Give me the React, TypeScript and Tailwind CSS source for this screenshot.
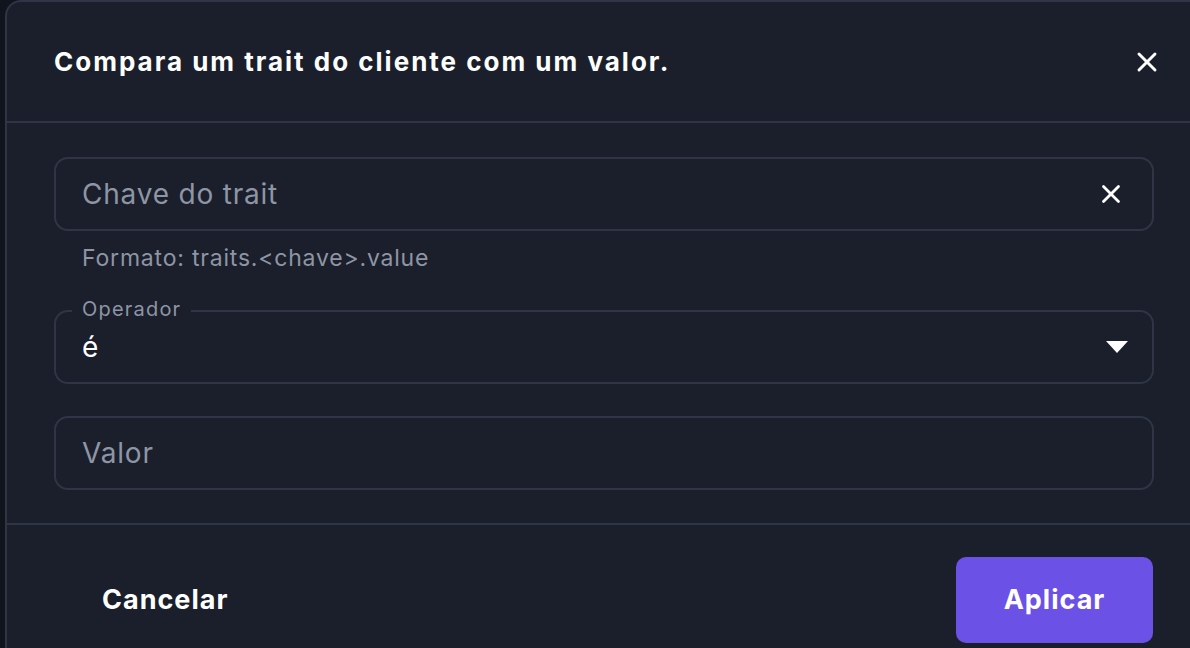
import { X } from "lucide-react";

export default function App() {
  return (
    <div
      className="w-[1190px] h-[648px] overflow-hidden bg-[#10141d] pl-[5px]"
      style={{ fontFamily: "Inter, 'Noto Sans', sans-serif" }}
    >
      <div className="h-full w-[1200px] bg-[#1a1f2b] border-l-2 border-t-2 border-[#2f3544] rounded-tl-2xl flex flex-col">
        {/* header */}
        <div className="h-[121px] flex items-center justify-between pl-[47px] pr-[42px] border-b-2 border-[#2f3544]">
          <h2 className="text-[26px] font-bold text-white tracking-[2px]">
            Compara um trait do cliente com um valor.
          </h2>
          <X className="text-white" size={32} strokeWidth={2.2} />
        </div>

        {/* body */}
        <div className="flex flex-col pl-[47px] pt-[34px] h-[402px] border-b-2 border-[#2f3544]">
          <div className="h-[74px] w-[1100px] rounded-[14px] border-2 border-[#2f3544] flex items-center justify-between pl-[26px] pr-[26px]">
            <span className="text-[28px] text-[#8e95a4] tracking-[0.8px]">Chave do trait</span>
            <X className="text-white" size={30} strokeWidth={2.2} />
          </div>
          <div className="pl-[28px] pt-[10px] text-[23px] text-[#8e95a4] tracking-[0.8px]">
            Formato: traits.&lt;chave&gt;.value
          </div>

          <div className="relative mt-[34px] h-[74px] w-[1100px] rounded-[14px] border-2 border-[#2f3544] flex items-center justify-between pl-[26px] pr-[24px]">
            <span className="absolute left-[16px] -top-[16px] px-[10px] bg-[#1a1f2b] text-[20px] leading-[26px] text-[#8e95a4] tracking-[1.2px]">
              Operador
            </span>
            <span className="text-[28px] text-white">é</span>
            <svg width="22" height="12" viewBox="0 0 22 12">
              <path d="M0 0 L22 0 L11 12 Z" fill="white" />
            </svg>
          </div>

          <div className="mt-[32px] h-[74px] w-[1100px] rounded-[14px] border-2 border-[#2f3544] flex items-center pl-[26px]">
            <span className="text-[28px] text-[#8e95a4] tracking-[0.8px]">Valor</span>
          </div>
        </div>

        {/* footer */}
        <div className="flex items-center justify-between w-[1146px] pl-[47px] pt-[32px]">
          <button className="px-[48px] h-[86px] text-[27px] font-bold text-white tracking-[1px]">
            Cancelar
          </button>
          <button className="w-[197px] h-[86px] rounded-[10px] bg-[#6b51e6] text-[27px] font-bold text-white tracking-[1px]">
            Aplicar
          </button>
        </div>
      </div>
    </div>
  );
}
